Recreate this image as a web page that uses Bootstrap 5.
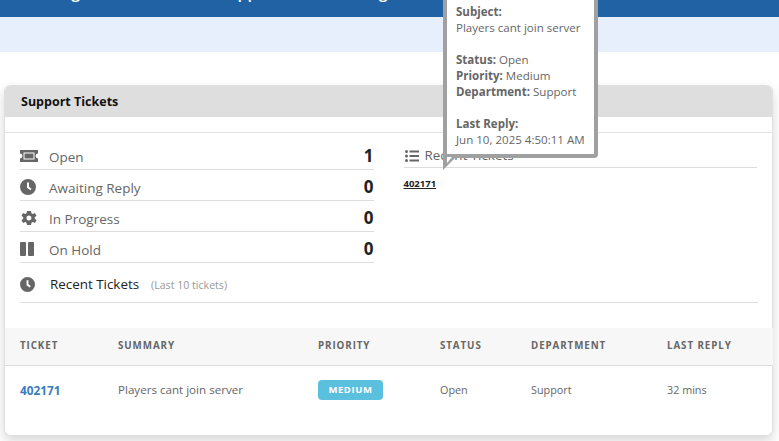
<!DOCTYPE html>
<html lang="en"><head><meta charset="utf-8">
<link href="https://cdn.jsdelivr.net/npm/bootstrap@5.3.0/dist/css/bootstrap.min.css" rel="stylesheet">
<style>
html,body{height:441px;overflow:hidden}
body{font-family:"Open Sans","Noto Sans",sans-serif;color:#666;background:#fff;font-size:12px;position:relative}
.topband{height:17px;background:#2062a3;overflow:hidden;color:#fff;font-size:16px;font-weight:600;padding-left:20px}
.topband div{margin-top:-20px;line-height:24px;white-space:nowrap;word-spacing:1px}
.subband{height:35px;background:#e8effc}
.ticketcard{margin:33px 6px 0 4px;height:351px;border:1px solid #e0e0e0;border-top:0;border-radius:6px;box-shadow:0 5px 12px rgba(0,0,0,.16);background:#fff}
.cardhead{height:32px;background:#dedede;border-radius:6px 6px 0 0;color:#111;font-weight:700;font-size:12.5px;padding:8px 16px;line-height:17px}
.headgap{height:16px;border-bottom:1px solid #e4e4e4}
.statsarea{padding:0 15px;height:195px}
.statcols{gap:30px}
.statcol{width:354px}
.statrow{height:31px;border-bottom:1px solid #ddd;font-size:13.5px;padding-top:3px}
.statrow:first-child{height:37px;padding-top:9px}
.statlabel{padding-top:4px}
.statico{width:18px;height:18px;fill:#666;flex:none;margin-right:11px}
.statnum{font-size:17px;font-weight:700;color:#222;line-height:1}
.recenthead{height:40px;border-bottom:1px solid #ddd;width:738px;font-size:13.4px;color:#222;padding-top:4px}
.recenthead .statico{width:15px;height:15px;margin-right:15px}
.lastten{font-size:10.6px;color:#999;margin-left:12px;padding-top:2px}
.listhead{height:35px;border-bottom:1px solid #ddd;font-size:13.4px;padding-top:11px;padding-left:1px}
.listhead svg{width:14px;height:14px;fill:#666;flex:none;margin-right:6px}
.ticketno{font-size:9.5px;font-weight:700;color:#222;text-decoration:underline;display:inline-block;margin-top:9px}
.tickettable{table-layout:fixed;width:768px;margin:0;--bs-table-bg:transparent;--bs-table-color:#666}
.tickettable th{background:#f7f7f7;height:37px;padding:0 0 0 15px;vertical-align:middle;font-size:9.8px;font-weight:700;letter-spacing:.9px;text-transform:uppercase;color:#666;border-bottom:1px solid #ddd}
.tickettable td{height:50px;padding:0 0 0 15px;vertical-align:middle;font-size:10.8px;line-height:16px;border:0;color:#666}
.tickettable td.summary{font-size:11.6px}
.ticketlink{display:block;line-height:16px;color:#3a7cc1;font-weight:700;font-size:11.8px;text-decoration:none}
.prio{display:block;width:65px;height:20px;line-height:20px;text-align:center;background:#5bc0de;color:#fff;font-size:9.5px;font-weight:700;letter-spacing:.6px;border-radius:4px}
.hoverbox{position:absolute;left:443px;top:-63px;width:155px;height:221px;background:#fff;border:4px solid #a0a0a0;border-radius:0 0 4px 0;padding:63px 5px 0 9px;font-size:11.55px;line-height:16px;color:#666;white-space:nowrap}
.hoverbox p{margin:0 0 16px}
.hoverarrow{position:absolute;left:443px;top:157px;width:13px;height:13px}
</style></head><body>
<div class="topband"><div>Viewing all Tickets in the Support Ticket Listing</div></div>
<div class="subband"></div>
<div class="ticketcard">
  <div class="cardhead">Support Tickets</div>
  <div class="headgap"></div>
  <div class="statsarea">
    <div class="d-flex statcols">
      <div class="statcol">
        <div class="statrow d-flex align-items-center"><svg class="statico" viewBox="0 0 18 18"><path fill-rule="evenodd" d="M0 3h18v3.600a2 2 0 0 0 0 4.800V15H0v-3.600a2 2 0 0 0 0-4.800zM3.500 5.500v7h11v-7z"/><path d="M4.500 6.500h9v5h-9z"/></svg><span class="statlabel">Open</span><span class="statnum ms-auto">1</span></div>
        <div class="statrow d-flex align-items-center"><svg class="statico" viewBox="0 0 18 18"><path fill-rule="evenodd" d="M8 1a8 8 0 1 1 0 16A8 8 0 0 1 8 1zM7 4.500v5.200l3.400 2.500 1.100-1.500L9 8.800V4.500z"/></svg><span class="statlabel">Awaiting Reply</span><span class="statnum ms-auto">0</span></div>
        <div class="statrow d-flex align-items-center"><svg class="statico" viewBox="0 0 18 18"><path fill-rule="evenodd" d="M7 2h4l.5 2.200 1.300.7 2.100-.8 1.600 2.700-1.700 1.400v1.600l1.700 1.400-1.600 2.700-2.100-.8-1.300.7L11 16H7l-.5-2.200-1.300-.7-2.100.8-1.600-2.700 1.700-1.400V8.200L1.500 6.800 3.100 4.100l2.100.8 1.300-.7zM9 6.500a2.500 2.500 0 1 0 0 5 2.500 2.500 0 0 0 0-5z"/></svg><span class="statlabel">In Progress</span><span class="statnum ms-auto">0</span></div>
        <div class="statrow d-flex align-items-center"><svg class="statico" viewBox="0 0 18 18"><rect x="0" y="2" width="6" height="14" rx="1"/><rect x="8" y="2" width="6" height="14" rx="1"/></svg><span class="statlabel">On Hold</span><span class="statnum ms-auto">0</span></div>
      </div>
      <div class="statcol">
        <div class="listhead d-flex align-items-center"><svg viewBox="0 0 14 14"><circle cx="1.500" cy="2.500" r="1.500"/><circle cx="1.500" cy="7" r="1.500"/><circle cx="1.500" cy="11.500" r="1.500"/><rect x="4.500" y="1.500" width="9.500" height="2"/><rect x="4.500" y="6" width="9.500" height="2"/><rect x="4.500" y="10.500" width="9.500" height="2"/></svg><span>Recent Tickets</span></div>
        <a class="ticketno" href="#">402171</a>
      </div>
    </div>
    <div class="recenthead d-flex align-items-center"><svg class="statico" viewBox="0 0 16 16"><path fill-rule="evenodd" d="M8 0a8 8 0 1 1 0 16A8 8 0 0 1 8 0zM7 3.500v5.200l3.400 2.500 1.100-1.500L9 7.800V3.500z"/></svg><span>Recent Tickets</span><span class="lastten">(Last 10 tickets)</span></div>
  </div>
  <table class="table tickettable">
    <colgroup><col style="width:98px"><col style="width:200px"><col style="width:122px"><col style="width:91px"><col style="width:136px"><col></colgroup>
    <thead><tr><th>Ticket</th><th>Summary</th><th>Priority</th><th>Status</th><th>Department</th><th>Last Reply</th></tr></thead>
    <tbody><tr><td><a class="ticketlink" href="#">402171</a></td><td class="summary">Players cant join server</td><td><span class="prio">MEDIUM</span></td><td>Open</td><td>Support</td><td>32 mins</td></tr></tbody>
  </table>
</div>
<div class="hoverbox"><p><b>Subject:</b><br>Players cant join server</p><p><b>Status:</b> Open<br><b>Priority:</b> Medium<br><b>Department:</b> Support</p><p><b>Last Reply:</b><br>Jun 10, 2025 4:50:11 AM</p></div>
<svg class="hoverarrow" viewBox="0 0 13 13"><polygon points="0,0 13,0 0,13" fill="#a0a0a0"/><polygon points="4,0 9,0 4,6" fill="#fff"/></svg>
<script src="https://cdn.jsdelivr.net/npm/bootstrap@5.3.0/dist/js/bootstrap.bundle.min.js"></script>
</body></html>
